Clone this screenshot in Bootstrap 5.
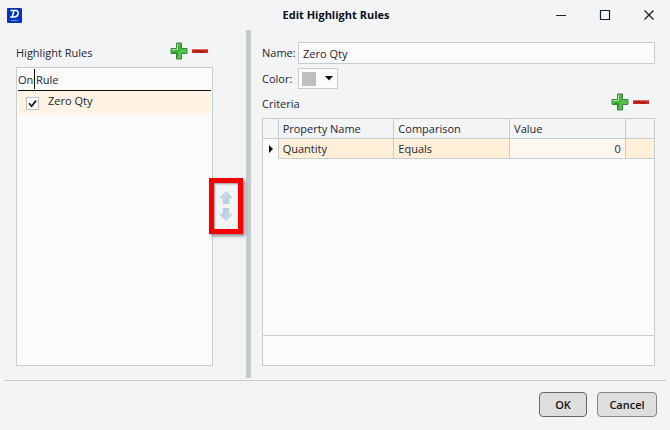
<!DOCTYPE html>
<html lang="en">
<head>
<meta charset="utf-8">
<meta name="viewport" content="width=device-width, initial-scale=1">
<title>Edit Highlight Rules</title>
<link href="https://cdn.jsdelivr.net/npm/bootstrap@5.3.0/dist/css/bootstrap.min.css" rel="stylesheet">
<style>
body{background:#f2f4f6;color:#1e2630;font:11px/16px "Open Sans","Noto Sans",sans-serif}
svg{display:block}
.dialog{min-height:100vh}
.titlebar{height:30px;padding:0 15px 0 7px}
.titlebar h1{font-size:11px;line-height:16px;font-weight:700;color:#0c1118;padding-left:10px}
.side{flex:1 1 0}
.tool{border:0;background:none;padding:0}
.win-btns{gap:32px}
.rules-pane{width:213px;padding:11px 0 12px 16px}
.pane-head{height:26px}
.rules-pane .pane-head{padding:0 5px 6px 0}
.well{background:#fbfbfb;border:1px solid #c6cdd1}
.rules-head{height:23px;margin:0 1px;border-bottom:1px solid #111;padding-top:1px}
.on-col{width:17px;border-right:1px solid #111;height:20px;line-height:22px;white-space:nowrap}
.rule-col{line-height:22px;padding-left:1px}
.rule-row{height:24px;margin:0 1px;background:#fff3e3;padding-left:8px;gap:9px}
.rule-row .form-check-input{width:13px;height:13px;margin:0;border:1px solid #b4bfc6;border-radius:0;background-color:#fff}
.rule-row .form-check-input:checked{background-color:#fff;background-size:13px;background-image:url("data:image/svg+xml,%3Csvg xmlns='http://www.w3.org/2000/svg' viewBox='0 0 13 13'%3E%3Cpath d='M3 6.2l2.6 3L10 3.6' fill='none' stroke='%23151515' stroke-width='1.7'/%3E%3C/svg%3E")}
.rule-row label{margin-bottom:4px}
.order-col{width:33px;padding:4px 8px 0 0}
.order-btns{gap:2px}
.callout{position:absolute;inset:-12px -10px;border:5px solid #f90000;box-shadow:2px 2px 3px rgba(60,60,60,.6),inset 1px 1px 2px rgba(60,60,60,.5);pointer-events:none}
.splitter{width:5px;background:#c5cacd}
.edit-pane{padding:12px 15px 12px 11px;min-width:0}
.field-label{width:36px}
.field{height:22px;border:1px solid #c6cdd1;border-radius:0;background:#fbfbfb;color:#1e2630;font-size:11px;line-height:16px;padding:2px 4px;min-width:0}
.swatch-pick{position:relative;width:40px;height:21px;border:1px solid #c6cdd1;background:#fbfbfb;padding:0 4px 0 3px}
.swatch-pick select{position:absolute;inset:0;width:100%;opacity:0}
.swatch{width:14px;height:14px;background:#bfbfbf}
.crit-head{height:29px;padding:0 6px 4px 0}
.crit{table-layout:fixed;margin:0;color:inherit;border-collapse:separate;border-spacing:0}
.crit th,.crit td{height:20px;padding:1px 4px;border-right:1px solid #c6cdd1;border-bottom:1px solid #c6cdd1;font-weight:400;line-height:17px}
.crit th:last-child,.crit td:last-child{border-right:0}
.crit th{background:#f2f4f6}
.crit td{background:#ffefd9}
.crit td.val{background:#fcf8f0}
.crit td.mark-col{background:#fbfbfb;border-bottom-color:#fbfbfb;padding:0 6px}
.grid-foot{height:30px;border-top:1px solid #c6cdd1}
.actions{margin:2px 4px 0 5px;border-top:1px solid #c6cacc;padding:11px 9px 13px 0;gap:10px}
.dlg-btn{height:25px;border:1px solid #858585;border-radius:4px;background:#dedede;color:#111;font-size:11px;line-height:16px;font-weight:600;padding:0;width:60px}
.dlg-btn.ok{width:48px;border-color:#666}
</style>
<script src="https://cdn.jsdelivr.net/npm/bootstrap@5.3.0/dist/js/bootstrap.bundle.min.js"></script>
</head>
<body>
<svg width="0" height="0" class="position-absolute" aria-hidden="true">
<defs>
<linearGradient id="green" x1="0" y1="0" x2="1" y2="1"><stop offset="0" stop-color="#7fd070"/><stop offset=".45" stop-color="#35b52c"/><stop offset=".55" stop-color="#54c34b"/><stop offset="1" stop-color="#5fbf56"/></linearGradient>
<linearGradient id="blue" x1="0" y1="0" x2="1" y2="1"><stop offset="0" stop-color="#d3e6f4"/><stop offset="1" stop-color="#a3c4de"/></linearGradient>
<symbol id="plus" viewBox="0 0 18 18"><path d="M6.500 1h5v5.500h5.500v5h-5.500v5.500h-5v-5.500h-5.500v-5h5.500z" fill="url(#green)" stroke="#42804a" stroke-width="1"/><path d="M7.500 2v5.500H2" fill="none" stroke="#b4e5ab"/><path d="M3 10.500h4.500v4.500" fill="none" stroke="#1e9e1c"/></symbol>
<symbol id="minus" viewBox="0 0 16 4"><path d="M0 0h16v4H0z" fill="#cf2a24"/><path d="M0 .5h16" stroke="#dd6a5c"/><path d="M2 2.500l4-1 3 1.500 4-1" stroke="#8e0e0e" fill="none"/></symbol>
<symbol id="arrow" viewBox="0 0 14 14"><path d="M7 .8l6 6.400H9.800V13H4.200V7.200H1z" fill="url(#blue)" stroke="#b5cbdb" stroke-width=".8"/></symbol>
</defs>
</svg>
<div class="dialog d-flex flex-column">
  <header class="titlebar d-flex align-items-center">
    <div class="side">
      <svg width="15" height="15" viewBox="0 0 15 15" aria-hidden="true"><rect width="15" height="15" rx="1" fill="#0835b4"/><path d="M5.700 2.500h3.200c3.700 0 2.800 6.500-2 6.500H3.200M6.800 3L5.400 8.500M3.500 2.500h3" fill="none" stroke="#fff" stroke-width="1.500"/><path d="M4 12.500h7" stroke="#739cff" stroke-width="1" stroke-dasharray="1.500 .5"/></svg>
    </div>
    <h1 class="m-0">Edit Highlight Rules</h1>
    <div class="side win-btns d-flex justify-content-end">
      <button class="tool" aria-label="Minimize"><svg width="12" height="12" viewBox="0 0 12 12"><path d="M1 6.500h10" stroke="#222"/></svg></button>
      <button class="tool" aria-label="Maximize"><svg width="12" height="12" viewBox="0 0 12 12"><path d="M1.500 1.500h9v9h-9z" fill="none" stroke="#18202a" stroke-width="1.200"/></svg></button>
      <button class="tool" aria-label="Close"><svg width="12" height="12" viewBox="0 0 12 12"><path d="M1.500 1.500l9 9m0-9l-9 9" stroke="#222" stroke-width="1.400"/></svg></button>
    </div>
  </header>
  <main class="d-flex flex-grow-1">
    <section class="rules-pane d-flex flex-column flex-shrink-0">
      <div class="pane-head d-flex align-items-center">
        <span class="me-auto pt-1">Highlight Rules</span>
        <button class="tool me-1" aria-label="Add rule"><svg width="18" height="18"><use href="#plus"/></svg></button>
        <button class="tool" aria-label="Remove rule"><svg width="16" height="4"><use href="#minus"/></svg></button>
      </div>
      <div class="well flex-grow-1">
        <div class="rules-head d-flex"><span class="on-col">On</span><span class="rule-col">Rule</span></div>
        <div class="rule-row d-flex align-items-center">
          <input class="form-check-input" type="checkbox" id="zero" checked>
          <label for="zero">Zero Qty</label>
        </div>
      </div>
    </section>
    <div class="order-col d-flex flex-column flex-shrink-0 justify-content-center align-items-center">
      <div class="order-btns position-relative d-flex flex-column">
        <button class="tool" aria-label="Move up"><svg width="14" height="15"><use href="#arrow"/></svg></button>
        <button class="tool" aria-label="Move down"><svg width="14" height="15" viewBox="0 0 14 15"><g transform="rotate(180 7 7.500)"><use href="#arrow" width="14" height="15"/></g></svg></button>
        <span class="callout"></span>
      </div>
    </div>
    <div class="splitter flex-shrink-0"></div>
    <section class="edit-pane d-flex flex-column flex-grow-1">
      <div class="d-flex align-items-center mb-1">
        <label class="field-label" for="name">Name:</label>
        <input class="field flex-grow-1" id="name" type="text" value="Zero Qty">
      </div>
      <div class="d-flex align-items-center">
        <label class="field-label" for="color">Color:</label>
        <div class="swatch-pick d-flex align-items-center justify-content-between">
          <span class="swatch"></span>
          <svg width="8" height="5" viewBox="0 0 8 5"><path d="M0 0h8L4 4.500z" fill="#111"/></svg>
          <select id="color"><option>Silver</option></select>
        </div>
      </div>
      <div class="crit-head d-flex align-items-center">
        <span class="me-auto pt-1">Criteria</span>
        <button class="tool me-1" aria-label="Add criterion"><svg width="18" height="18"><use href="#plus"/></svg></button>
        <button class="tool" aria-label="Remove criterion"><svg width="16" height="4"><use href="#minus"/></svg></button>
      </div>
      <div class="well flex-grow-1 d-flex flex-column">
        <table class="crit w-100">
          <colgroup><col style="width:4%"><col style="width:29.600%"><col style="width:29.600%"><col style="width:29.600%"><col></colgroup>
          <thead><tr><th></th><th scope="col">Property Name</th><th scope="col">Comparison</th><th scope="col">Value</th><th></th></tr></thead>
          <tbody><tr><td class="mark-col"><svg width="4" height="8" viewBox="0 0 4 8"><path d="M0 0l4 4-4 4z" fill="#111"/></svg></td><td>Quantity</td><td>Equals</td><td class="val text-end">0</td><td></td></tr></tbody>
        </table>
        <div class="grid-foot mt-auto"></div>
      </div>
    </section>
  </main>
  <footer class="actions d-flex justify-content-end">
    <button class="dlg-btn ok">OK</button>
    <button class="dlg-btn">Cancel</button>
  </footer>
</div>
</body>
</html>
